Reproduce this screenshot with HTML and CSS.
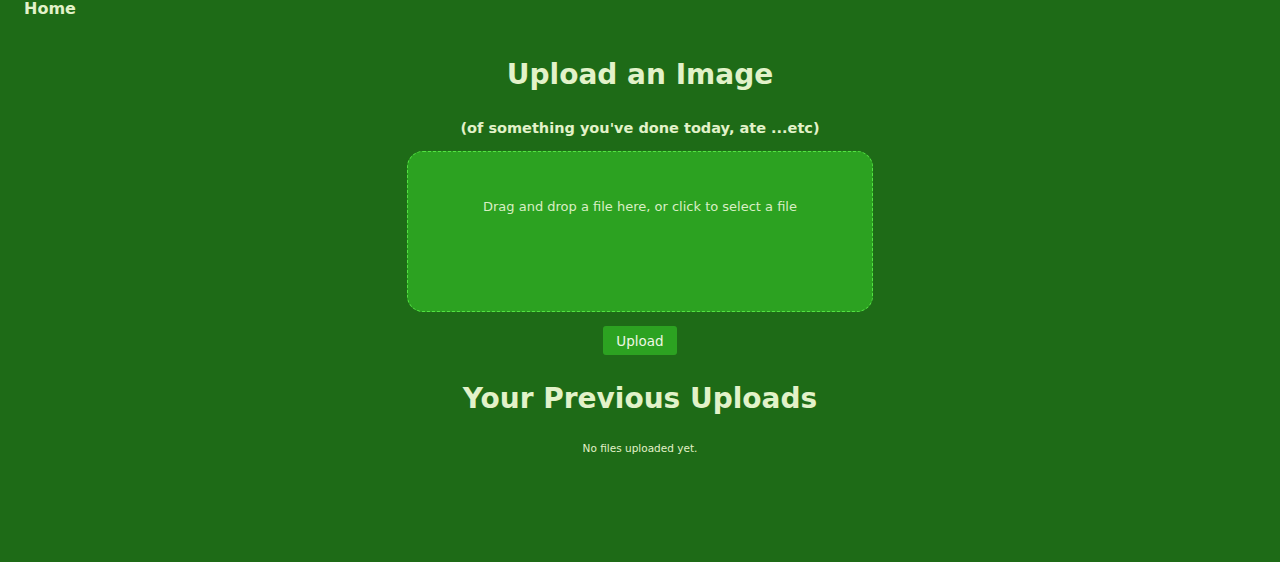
FILE: index.html
```html
<!DOCTYPE html>
<html>
<head>
<meta charset="utf-8">
<link rel="stylesheet" href="styles.css">
</head>
<body>
<nav class="nav"><a class="nav-link" href="#">Home</a></nav>
<main class="main">
  <h1 class="title">Upload an Image</h1>
  <h3 class="subtitle">(of something you've done today, ate ...etc)</h3>
  <div class="dropzone"><p class="dropzone-text">Drag and drop a file here, or click to select a file</p></div>
  <button class="upload-btn">Upload</button>
  <h2 class="title">Your Previous Uploads</h2>
  <p class="empty">No files uploaded yet.</p>
</main>
</body>
</html>
```
FILE: styles.css
```css
html, body {
  margin: 0;
  padding: 0;
  background: #1e6b17;
  height: 100%;
}
body {
  font-family: "DejaVu Sans", "Open Sans", sans-serif;
  color: #e2f2c9;
}
.nav {
  height: 18px;
  padding-left: 24px;
  display: flex;
  align-items: flex-end;
}
.nav-link {
  color: #e2f2c9;
  text-decoration: none;
  font-weight: bold;
  font-size: 16px;
  line-height: 18px;
  margin-top: -4px;
}
.main {
  display: flex;
  flex-direction: column;
  align-items: center;
}
.title {
  margin: 0;
  font-size: 28px;
  font-weight: bold;
  line-height: 36px;
}
.main > .title:first-child {
  margin-top: 39px;
}
.subtitle {
  margin: 25px 0 0 0;
  font-size: 14.5px;
  font-weight: bold;
  line-height: 20px;
}
.dropzone {
  margin-top: 13px;
  width: 464px;
  height: 159px;
  background: #2ca221;
  border: 1px dashed #52e242;
  border-radius: 16px;
  display: flex;
  justify-content: center;
}
.dropzone-text {
  margin: 46px 0 0 0;
  font-size: 13px;
  line-height: 18px;
  color: #d9efc4;
}
.upload-btn {
  margin-top: 14px;
  width: 74px;
  height: 29px;
  background: #2ca221;
  color: #eef7e4;
  border: none;
  border-radius: 3px;
  font-family: inherit;
  font-size: 13.5px;
  padding: 0;
}
.upload-btn + .title {
  margin-top: 26px;
}
.empty {
  margin: 24px 0 0 0;
  font-size: 10.5px;
  line-height: 14px;
}
```
